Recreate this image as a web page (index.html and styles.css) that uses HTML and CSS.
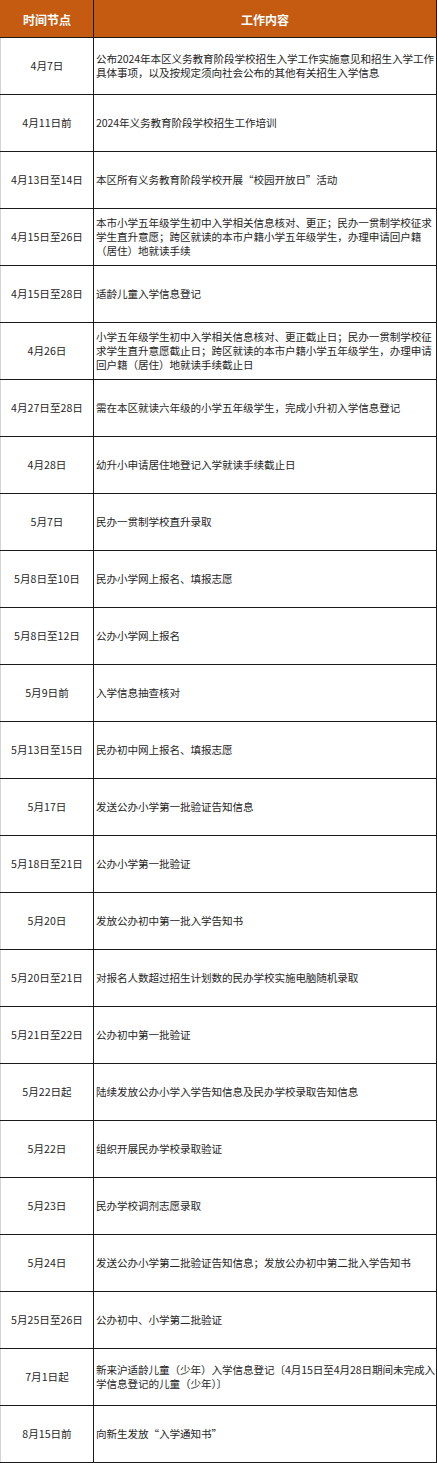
FILE: index.html
```html
<!DOCTYPE html>
<html lang="zh-CN">
<head>
<meta charset="utf-8">
<title>招生入学工作时间节点</title>
<link rel="stylesheet" href="styles.css">
</head>
<body>
<table class="schedule">
  <colgroup>
    <col class="col-date">
    <col class="col-work">
  </colgroup>
  <thead>
    <tr>
      <th>时间节点</th>
      <th>工作内容</th>
    </tr>
  </thead>
  <tbody>
    <tr><td class="date">4月7日</td><td class="work">公布2024年本区义务教育阶段学校招生入学工作实施意见和招生入学工作具体事项，以及按规定须向社会公布的其他有关招生入学信息</td></tr>
    <tr><td class="date">4月11日前</td><td class="work">2024年义务教育阶段学校招生工作培训</td></tr>
    <tr><td class="date">4月13日至14日</td><td class="work">本区所有义务教育阶段学校开展“校园开放日”活动</td></tr>
    <tr><td class="date">4月15日至26日</td><td class="work">本市小学五年级学生初中入学相关信息核对、更正；民办一贯制学校征求学生直升意愿；跨区就读的本市户籍小学五年级学生，办理申请回户籍（居住）地就读手续</td></tr>
    <tr><td class="date">4月15日至28日</td><td class="work">适龄儿童入学信息登记</td></tr>
    <tr><td class="date">4月26日</td><td class="work">小学五年级学生初中入学相关信息核对、更正截止日；民办一贯制学校征求学生直升意愿截止日；跨区就读的本市户籍小学五年级学生，办理申请回户籍（居住）地就读手续截止日</td></tr>
    <tr><td class="date">4月27日至28日</td><td class="work">需在本区就读六年级的小学五年级学生，完成小升初入学信息登记</td></tr>
    <tr><td class="date">4月28日</td><td class="work">幼升小申请居住地登记入学就读手续截止日</td></tr>
    <tr><td class="date">5月7日</td><td class="work">民办一贯制学校直升录取</td></tr>
    <tr><td class="date">5月8日至10日</td><td class="work">民办小学网上报名、填报志愿</td></tr>
    <tr><td class="date">5月8日至12日</td><td class="work">公办小学网上报名</td></tr>
    <tr><td class="date">5月9日前</td><td class="work">入学信息抽查核对</td></tr>
    <tr><td class="date">5月13日至15日</td><td class="work">民办初中网上报名、填报志愿</td></tr>
    <tr><td class="date">5月17日</td><td class="work">发送公办小学第一批验证告知信息</td></tr>
    <tr><td class="date">5月18日至21日</td><td class="work">公办小学第一批验证</td></tr>
    <tr><td class="date">5月20日</td><td class="work">发放公办初中第一批入学告知书</td></tr>
    <tr><td class="date">5月20日至21日</td><td class="work">对报名人数超过招生计划数的民办学校实施电脑随机录取</td></tr>
    <tr><td class="date">5月21日至22日</td><td class="work">公办初中第一批验证</td></tr>
    <tr><td class="date">5月22日起</td><td class="work">陆续发放公办小学入学告知信息及民办学校录取告知信息</td></tr>
    <tr><td class="date">5月22日</td><td class="work">组织开展民办学校录取验证</td></tr>
    <tr><td class="date">5月23日</td><td class="work">民办学校调剂志愿录取</td></tr>
    <tr><td class="date">5月24日</td><td class="work">发送公办小学第二批验证告知信息；发放公办初中第二批入学告知书</td></tr>
    <tr><td class="date">5月25日至26日</td><td class="work">公办初中、小学第二批验证</td></tr>
    <tr><td class="date">7月1日起</td><td class="work">新来沪适龄儿童（少年）入学信息登记〔4月15日至4月28日期间未完成入学信息登记的儿童（少年）〕</td></tr>
    <tr><td class="date">8月15日前</td><td class="work">向新生发放“入学通知书”</td></tr>
  </tbody>
</table>
</body>
</html>
```

FILE: styles.css
```css
html, body {
  margin: 0;
  padding: 0;
  background: #ffffff;
}

.schedule {
  width: 436px;
  border-collapse: collapse;
  table-layout: fixed;
  font-family: "Noto Sans CJK SC", "Noto Sans", sans-serif;
  color: #262626;
}

.col-date { width: 93px; }
.col-work { width: 343px; }

.schedule th {
  height: 36px;
  padding: 0;
  background: #c55a11;
  color: #ffffff;
  font-size: 12px;
  font-weight: bold;
  text-align: center;
  vertical-align: middle;
  border: 1px solid #c55a11;
  border-bottom: 1px solid #1a1a1a;
  border-right: 1px solid #1a1a1a;
}

.schedule td {
  height: 56px;
  padding: 0;
  font-size: 10.6px;
  line-height: 14.2px;
  vertical-align: middle;
  border: 1px solid #1a1a1a;
}

.schedule td.date {
  text-align: center;
  border-left: 1px solid #d4d4d4;
}

.schedule td.work {
  text-align: left;
  padding-left: 2px;
  letter-spacing: -0.1px;
}
```
